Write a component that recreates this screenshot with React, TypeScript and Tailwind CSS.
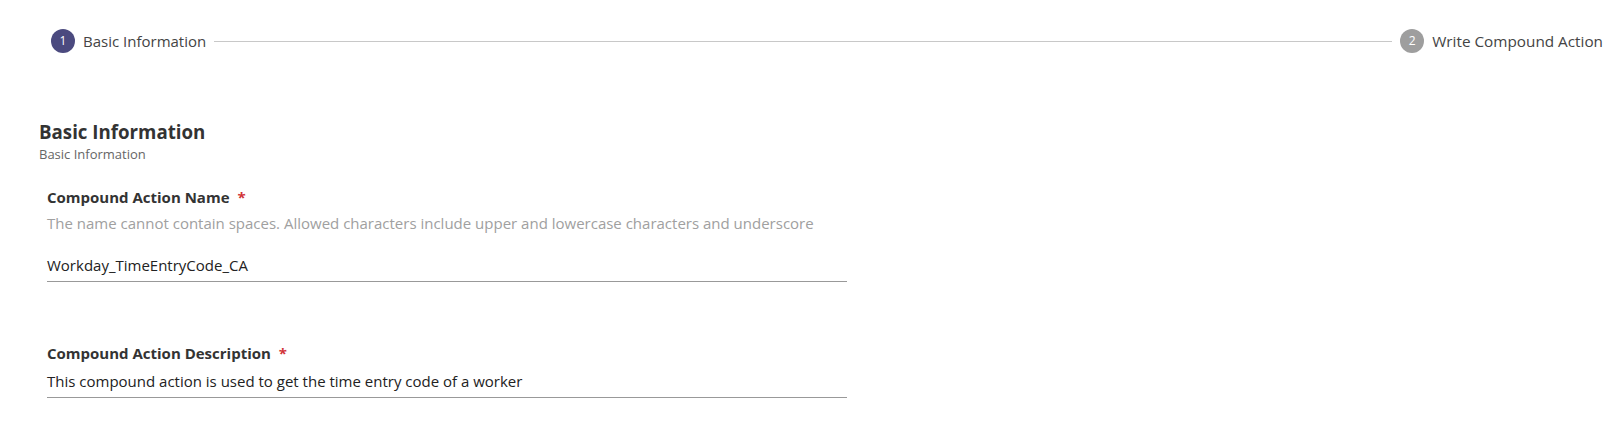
import React from "react";

export default function App() {
  const font = { fontFamily: '"Open Sans", "Noto Sans", sans-serif' };
  return (
    <div className="w-[1610px] h-[434px] bg-white text-[#333]" style={font}>
      <div className="flex items-center pl-[51px] pr-[7px] pt-[29px] h-[53px]">
        <div className="w-6 h-6 rounded-full bg-[#4b4a7f] text-white text-[12px] flex items-center justify-center">1</div>
        <span className="ml-2 text-[15px] text-[#444]">Basic Information</span>
        <div className="flex-1 h-px bg-[#c8c8c8] mx-2" />
        <div className="w-6 h-6 rounded-full bg-[#9e9e9e] text-white text-[12px] flex items-center justify-center">2</div>
        <span className="ml-2 text-[15.3px] text-[#444]">Write Compound Action</span>
      </div>
      <div className="pl-[39px] mt-[66px]">
        <div className="text-[18.7px] font-bold leading-[25px] text-[#333]">Basic Information</div>
        <div className="mt-[2px] text-[13px] leading-[16px] text-[#666]">Basic Information</div>
      </div>
      <div className="pl-[47px] mt-[25px] w-[847px]">
        <div className="text-[15px] font-bold leading-[20px] text-[#333]">
          Compound Action Name <span className="text-[#d13438] ml-1">*</span>
        </div>
        <div className="text-[15px] leading-[20px] text-[#a0a0a0] mt-[6px]">
          The name cannot contain spaces. Allowed characters include upper and lowercase characters and underscore
        </div>
        <div className="mt-[22px] border-b border-[#999] pb-[6px] text-[15px] leading-[20px] text-[#222]">
          Workday_TimeEntryCode_CA
        </div>
        <div className="mt-[61px] text-[15px] font-bold leading-[20px] text-[#333]">
          Compound Action Description <span className="text-[#d13438] ml-1">*</span>
        </div>
        <div className="mt-[8px] border-b border-[#999] pb-[6px] text-[15px] leading-[20px] text-[#222]">
          This compound action is used to get the time entry code of a worker
        </div>
      </div>
    </div>
  );
}
